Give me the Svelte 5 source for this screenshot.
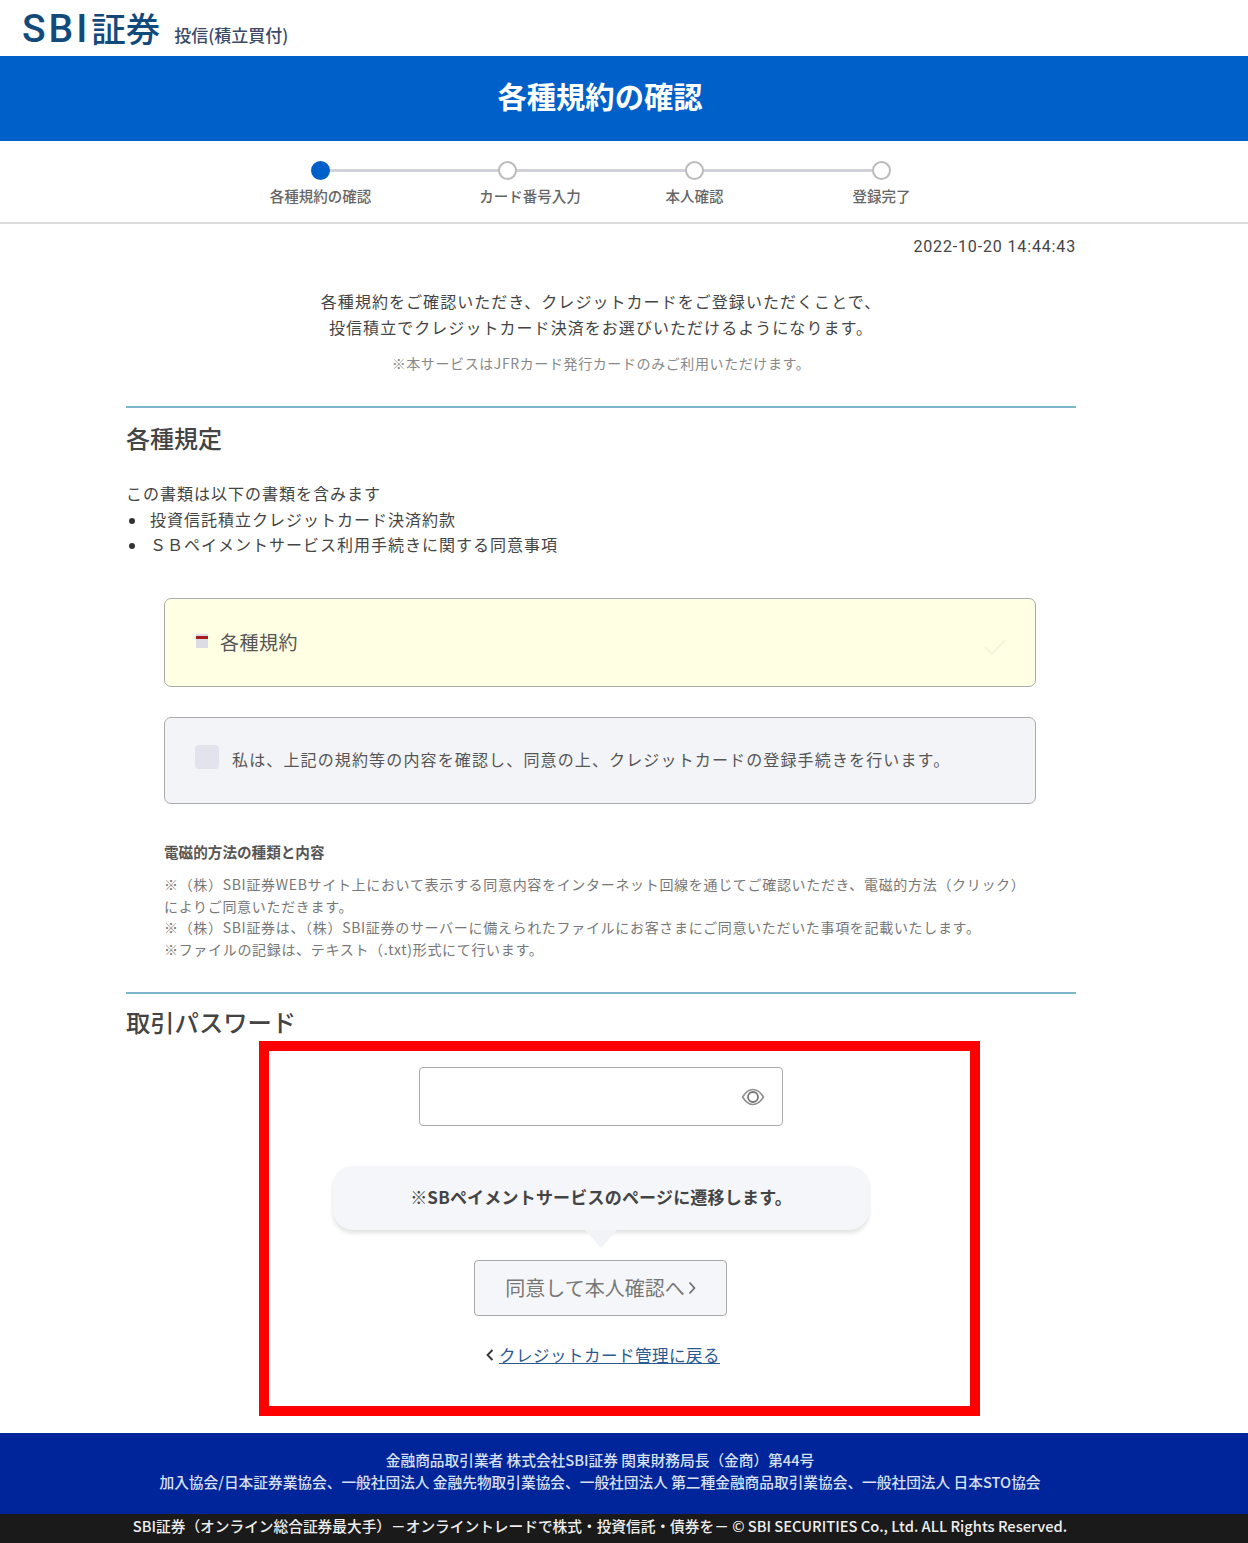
<script>
  const steps = [
    { label: '各種規約の確認', active: true },
    { label: 'カード番号入力', shifted: true },
    { label: '本人確認' },
    { label: '登録完了' }
  ];
</script>

<div class="page">
  <header class="top">
    <div class="logo"><span class="logo-sbi">SBI</span><span class="logo-main">証券</span><span class="logo-sub">投信(積立買付)</span></div>
  </header>
  <div class="banner"><h1>各種規約の確認</h1></div>

  <ol class="steps">
    {#each steps as s, i}
      <li class="step" class:last={i === steps.length - 1}>
        <span class="dot" class:on={s.active}></span>
        <span class="step-label" class:shifted={s.shifted}>{s.label}</span>
      </li>
    {/each}
  </ol>

  <main class="wrap">
    <p class="stamp">2022-10-20 14:44:43</p>
    <p class="intro">各種規約をご確認いただき、クレジットカードをご登録いただくことで、<br />投信積立でクレジットカード決済をお選びいただけるようになります。</p>
    <p class="small">※本サービスはJFRカード発行カードのみご利用いただけます。</p>

    <section class="sec first">
      <h2>各種規定</h2>
      <p class="lead">この書類は以下の書類を含みます</p>
      <ul class="docs">
        <li>投資信託積立クレジットカード決済約款</li>
        <li>ＳＢペイメントサービス利用手続きに関する同意事項</li>
      </ul>

      <div class="box terms">
        <svg class="doc" viewBox="0 0 12 14" width="12" height="14" aria-hidden="true">
          <rect width="12" height="14" fill="#dcdce6" />
          <rect x="0" y="2" width="12" height="3" fill="#a81c1c" />
        </svg>
        <span class="terms-text">各種規約</span>
        <svg class="check" viewBox="0 0 24 18" width="24" height="18" aria-hidden="true">
          <path d="M2 9l7 7L22 2" fill="none" stroke="#f4f4da" stroke-width="2" />
        </svg>
      </div>

      <label class="box agree">
        <span class="cb"></span>
        <span class="agree-text">私は、上記の規約等の内容を確認し、同意の上、クレジットカードの登録手続きを行います。</span>
      </label>

      <div class="notes">
        <h3>電磁的方法の種類と内容</h3>
        <p>※（株）SBI証券WEBサイト上において表示する同意内容をインターネット回線を通じてご確認いただき、電磁的方法（クリック）<br />によりご同意いただきます。<br />※（株）SBI証券は、（株）SBI証券のサーバーに備えられたファイルにお客さまにご同意いただいた事項を記載いたします。<br />※ファイルの記録は、テキスト（.txt)形式にて行います。</p>
      </div>
    </section>

    <section class="sec second">
      <h2>取引パスワード</h2>
      <div class="pw">
        <svg viewBox="0 0 24 18" width="24" height="18" aria-hidden="true">
          <path d="M1.5 9C5 3.5 8.5 1.5 12 1.5S19 3.5 22.5 9C19 14.5 15.5 16.5 12 16.5S5 14.5 1.5 9Z" fill="none" stroke="#8f8f8f" stroke-width="1.6" />
          <circle cx="12" cy="9" r="5" fill="none" stroke="#777" stroke-width="1.8" />
        </svg>
      </div>
      <div class="bubble"><span class="bubble-text">※SBペイメントサービスのページに遷移します。</span></div>
      <button class="next" type="button"><span class="next-text">同意して本人確認へ</span><svg class="chev" viewBox="0 0 8 14" width="8" height="14" aria-hidden="true"><path d="M1.5 1.5L6.5 7l-5 5.5" fill="none" stroke="#666" stroke-width="1.6" /></svg></button>
      <p class="back"><svg class="chev-l" viewBox="0 0 8 12" width="8" height="12" aria-hidden="true"><path d="M6.5 1L1.5 6l5 5" fill="none" stroke="#333" stroke-width="1.8" /></svg><a href="#back">クレジットカード管理に戻る</a></p>
    </section>
  </main>

  <footer>
    <div class="foot-blue">
      <p>金融商品取引業者 株式会社SBI証券 関東財務局長（金商）第44号</p>
      <p>加入協会/日本証券業協会、一般社団法人 金融先物取引業協会、一般社団法人 第二種金融商品取引業協会、一般社団法人 日本STO協会</p>
    </div>
    <div class="foot-black">SBI証券（オンライン総合証券最大手）－オンライントレードで株式・投資信託・債券を－ © SBI SECURITIES Co., Ltd. ALL Rights Reserved.</div>
  </footer>

  <div class="redbox"></div>
</div>

<style>
  :global(body) {
    margin: 0;
    background: #fff;
    font-family: "Noto Sans CJK JP", "Noto Sans", sans-serif;
    color: #333;
  }
  .page { position: relative; width: 1248px; height: 1543px; overflow: hidden; display: flex; flex-direction: column; }
  p, h1, h2, h3, ul, ol { margin: 0; padding: 0; }

  .top { height: 56px; box-sizing: border-box; padding-left: 22px; }
  .logo { display: flex; align-items: baseline; padding-top: 3px; line-height: 48px; }
  .logo-sbi { font-family: "Roboto", sans-serif; font-size: 39px; font-weight: 500; color: #134a7c; letter-spacing: 3px; }
  .logo-main { font-size: 34.5px; font-weight: 500; color: #134a7c; margin-left: 1px; }
  .logo-sub { font-size: 17px; color: #3a4a68; margin-left: 14px; font-weight: 500; }

  .banner { height: 85px; background: #0060c9; display: flex; align-items: center; justify-content: center; padding: 0 48px 6px 0; box-sizing: border-box; }
  h1 { font-size: 29.3px; font-weight: 700; color: #fff; line-height: 1; }

  .steps { list-style: none; height: 83px; box-sizing: border-box; border-bottom: 2px solid #dcdcdc; display: flex; padding: 20px 0 0 227px; }
  .step { width: 187px; display: flex; flex-direction: column; align-items: center; position: relative; }
  .step::after { content: ""; position: absolute; left: 50%; top: 8px; width: 187px; height: 3px; background: #d2d3da; }
  .step.last::after { display: none; }
  .dot { width: 15px; height: 15px; border: 2px solid #bbb; border-radius: 50%; background: #fff; z-index: 1; }
  .dot.on { background: #0060c9; border-color: #0060c9; }
  .step-label { font-size: 14.5px; font-weight: 500; color: #666; margin-top: 6px; line-height: 20px; white-space: nowrap; }
  .step-label.shifted { margin-left: 45px; }

  .wrap { width: 950px; margin-left: 126px; flex: 1; }
  .stamp { text-align: right; font-family: "Roboto", sans-serif; font-size: 16px; color: #444; line-height: 20px; margin-top: 13px; letter-spacing: .85px; }
  .intro { text-align: center; font-size: 16px; letter-spacing: 1.05px; line-height: 26px; color: #444; margin-top: 31px; }
  .small { text-align: center; font-size: 14px; letter-spacing: .6px; color: #888; line-height: 20px; margin-top: 13px; }

  .sec { border-top: 2px solid #7db5cc; }
  .first { margin-top: 33px; height: 586px; box-sizing: border-box; }
  h2 { font-size: 24px; font-weight: 500; line-height: 32px; color: #444; }
  .first h2 { margin-top: 14px; }
  .lead { font-size: 16px; letter-spacing: 1px; line-height: 24px; margin-top: 27px; color: #444; }
  .docs { list-style: none; font-size: 16px; letter-spacing: 1px; line-height: 25px; color: #444; margin-top: 2px; }
  .docs li { padding-left: 24px; position: relative; }
  .docs li::before { content: ""; position: absolute; left: 3px; top: 11px; width: 6px; height: 6px; border-radius: 50%; background: #333; }

  .box { width: 872px; box-sizing: border-box; margin-left: 38px; border: 1.5px solid #aaa; border-radius: 7px; display: flex; align-items: center; }
  .terms { height: 89px; margin-top: 41px; background: #ffffe3; padding-left: 31px; }
  .doc { margin: -3px 12px 0 0; }
  .terms-text { font-size: 19px; letter-spacing: .5px; color: #555; padding-bottom: 3px; }
  .check { margin: 8px 28px 0 auto; }
  .agree { height: 87px; margin-top: 30px; background: #f3f4f8; padding-left: 30px; }
  .cb { width: 24px; height: 24px; border-radius: 4px; background: #e1e4ec; margin-right: 13px; margin-top: -8px; }
  .agree-text { font-size: 16px; letter-spacing: 1.14px; color: #555; padding-bottom: 3px; }

  .notes { margin: 37px 0 0 38px; }
  h3 { font-size: 14.6px; font-weight: 700; color: #555; line-height: 22px; }
  .notes p { font-size: 14px; letter-spacing: .68px; line-height: 21.6px; color: #777; margin-top: 11px; white-space: nowrap; }

  .second { display: flex; flex-direction: column; align-items: center; }
  .second h2 { align-self: flex-start; margin-top: 12px; font-size: 24.3px; }
  .pw { width: 364px; height: 59px; box-sizing: border-box; margin-top: 29px; border: 1.5px solid #aaa; border-radius: 4px; display: flex; align-items: center; justify-content: flex-end; padding-right: 17px; }
  .bubble { position: relative; width: 536px; height: 64px; margin-top: 40px; border-radius: 20px; background: #f5f6f9; box-shadow: 0 3px 4px rgba(0,0,0,.12); display: flex; align-items: center; justify-content: center; font-size: 17px; letter-spacing: .2px; font-weight: 700; color: #444; }
  .bubble-text { padding-bottom: 4px; }
  .bubble::after { content: ""; position: absolute; left: 50%; top: 64px; margin-left: -16px; border: solid transparent; border-width: 18px 16px 0; border-top-color: #f2f3f6; }
  .next { width: 253px; height: 56px; margin: 30px 1px 0 0; background: #f5f6f9; border: 1.5px solid #aaa; border-radius: 4px; font: inherit; font-size: 20px; color: #777; padding: 0; display: flex; align-items: center; justify-content: center; }
  .next-text { padding-bottom: 2px; }
  .chev { margin-left: 3px; }
  .back { margin: 27px 0 0 4px; font-size: 16.5px; line-height: 24px; letter-spacing: .5px; color: #333; display: flex; align-items: center; }
  .back a { color: #2a5a92; text-decoration: underline; }
  .chev-l { margin-right: 5px; }

  .foot-blue { height: 81px; background: #00259b; color: #d8e0f0; text-align: center; font-size: 14.7px; line-height: 22px; font-weight: 500; padding: 16px 48px 0 0; box-sizing: border-box; }
  .foot-black { height: 29px; background: #1a1a1a; color: #eee; text-align: center; font-size: 14.7px; line-height: 24px; font-weight: 500; white-space: nowrap; padding-right: 48px; }

  .redbox { position: absolute; left: 259px; top: 1041px; width: 721px; height: 375px; box-sizing: border-box; border: 10px solid #f00; pointer-events: none; }
</style>
